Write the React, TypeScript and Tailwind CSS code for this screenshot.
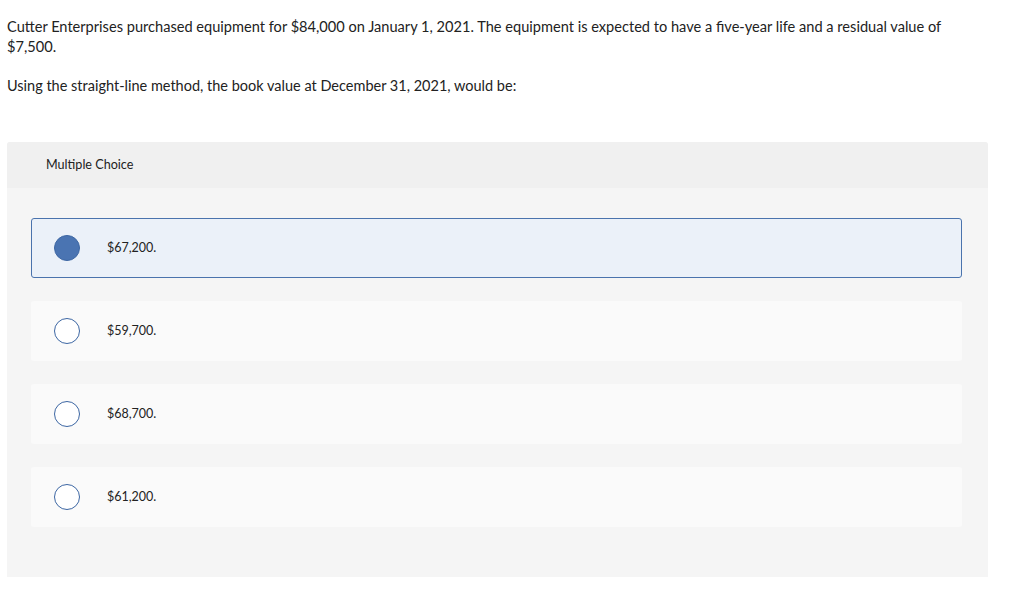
import React from 'react';

const options = ['$67,200.', '$59,700.', '$68,700.', '$61,200.'];

const App: React.FC = () => {
  const selected = 0;
  return (
    <div className="min-h-screen bg-white text-[#222] font-['Lato','Liberation_Sans',sans-serif]">
      <div className="w-[981px] pl-[7px] pt-[17px]">
        {/* Question */}
        <p className="text-[14.6px] leading-[20px]">
          Cutter Enterprises purchased equipment for $84,000 on January 1, 2021. The equipment is expected to have a five-year life and a residual value of $7,500.
        </p>
        <p className="mt-[19px] text-[14.5px] leading-[20px]">
          Using the straight-line method, the book value at December 31, 2021, would be:
        </p>
      </div>

      {/* Answer panel */}
      <div className="ml-[7px] mt-[46px] w-[981px] rounded-t-[3px] bg-[#f5f5f5]">
        <div className="flex h-[46px] items-center rounded-t-[3px] bg-[#f0f0f0] pl-[39px] text-[12.6px]">
          Multiple Choice
        </div>
        <div className="flex flex-col gap-[23px] pl-[24px] pr-[26px] pt-[30px] pb-[50px]">
          {options.map((opt, i) => (
            <div
              key={opt}
              className={
                i === selected
                  ? 'flex h-[60px] items-center rounded-[3px] border border-[#4a73ad] bg-[#ebf1f9] pl-[22px]'
                  : 'flex h-[60px] items-center rounded-[3px] bg-[#fafafa] pl-[23px]'
              }
            >
              {i === selected ? (
                <span className="h-[26px] w-[26px] rounded-full border border-[#3c66a3] bg-[#4a74b2]" />
              ) : (
                <span className="h-[26px] w-[26px] rounded-full border border-[#3c66a3] bg-white" />
              )}
              <span className="ml-[27px] text-[12.5px]">{opt}</span>
            </div>
          ))}
        </div>
      </div>
    </div>
  );
};

export default App;
